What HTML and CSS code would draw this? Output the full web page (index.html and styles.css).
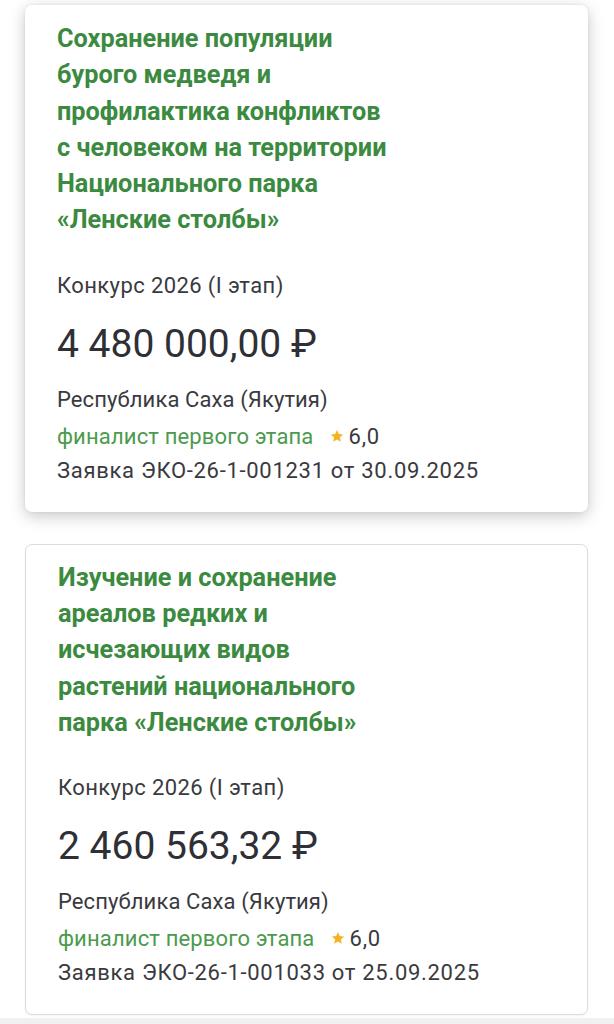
FILE: index.html
```html
<!DOCTYPE html>
<html lang="ru">
<head>
<meta charset="utf-8">
<link rel="stylesheet" href="styles.css">
</head>
<body>
<div class="list">
  <div class="card card-raised">
    <div class="title">Сохранение популяции<br>бурого медведя и<br>профилактика конфликтов<br>с человеком на территории<br>Национального парка<br>«Ленские столбы»</div>
    <div class="contest">Конкурс 2026 (I этап)</div>
    <div class="amount">4 480 000,00 ₽</div>
    <div class="region">Республика Саха (Якутия)</div>
    <div class="status"><span class="status-text">финалист первого этапа</span><span class="score"><svg class="star" viewBox="0 0 24 24"><path d="M12 1.8l3.1 6.8 7.3.8-5.5 5 1.6 7.3L12 17.9l-6.5 3.8 1.6-7.3-5.5-5 7.3-.8z"/></svg>6,0</span></div>
    <div class="app">Заявка ЭКО-26-1-001231 от 30.09.2025</div>
  </div>
  <div class="card card-flat">
    <div class="title">Изучение и сохранение<br>ареалов редких и<br>исчезающих видов<br>растений национального<br>парка «Ленские столбы»</div>
    <div class="contest">Конкурс 2026 (I этап)</div>
    <div class="amount">2 460 563,32 ₽</div>
    <div class="region">Республика Саха (Якутия)</div>
    <div class="status"><span class="status-text">финалист первого этапа</span><span class="score"><svg class="star" viewBox="0 0 24 24"><path d="M12 1.8l3.1 6.8 7.3.8-5.5 5 1.6 7.3L12 17.9l-6.5 3.8 1.6-7.3-5.5-5 7.3-.8z"/></svg>6,0</span></div>
    <div class="app">Заявка ЭКО-26-1-001033 от 25.09.2025</div>
  </div>
</div>
<div class="page-bottom"></div>
</body>
</html>
```
FILE: styles.css
```css
html, body {
  margin: 0;
  padding: 0;
  background: #ffffff;
}
body {
  font-family: Roboto, "Noto Sans", sans-serif;
  color: #3a3a3e;
}
.list {
  display: flex;
  flex-direction: column;
  gap: 32px;
  padding: 5px 26px 0 25px;
}
.card {
  background: #fff;
  border-radius: 7px;
  padding: 16px 30px 24px 32px;
  display: flex;
  flex-direction: column;
}
.card-raised {
  box-shadow: 0 4px 16px rgba(0,0,0,0.22), 0 0 3px rgba(0,0,0,0.08);
}
.card-flat {
  border: 1px solid #dcdcdc;
  padding-top: 15px;
  box-shadow: 0 1px 2px rgba(0,0,0,0.05);
}
.title {
  font-size: 25.3px;
  font-weight: 700;
  line-height: 36.3px;
  color: #3b8a3f;
}
.contest {
  margin-top: 30px;
  font-size: 22px;
  letter-spacing: 0.4px;
  line-height: 34px;
}
.amount {
  margin-top: 19px;
  font-size: 39px;
  line-height: 44px;
  color: #2f3036;
}
.region {
  margin-top: 17px;
  font-size: 22px;
  letter-spacing: 0.1px;
  line-height: 34px;
}
.status {
  margin-top: 3px;
  font-size: 22px;
  line-height: 34px;
  display: flex;
  align-items: center;
}
.status-text {
  color: #4c9a4c;
  letter-spacing: 0.15px;
}
.score {
  margin-left: 17px;
  display: inline-flex;
  align-items: center;
  gap: 4px;
  letter-spacing: 0.8px;
}
.star {
  width: 14px;
  height: 14px;
  fill: #f4b321;
  margin-top: -2px;
}
.app {
  font-size: 22px;
  letter-spacing: 0.7px;
  line-height: 34px;
}
.page-bottom {
  margin-top: 3px;
  height: 20px;
  background: #f1f1f1;
}
```
